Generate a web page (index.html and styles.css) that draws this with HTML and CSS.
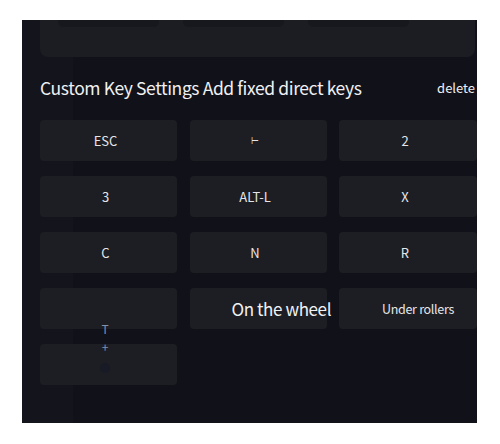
FILE: index.html
```html
<!DOCTYPE html>
<html>
<head>
<meta charset="utf-8">
<link rel="stylesheet" href="styles.css">
</head>
<body>
<div class="panel">
  <div class="top-card">
    <div class="tab"></div>
    <div class="tab"></div>
    <div class="tab"></div>
  </div>
  <div class="header">
    <div class="title">Custom Key Settings Add fixed direct keys</div>
    <div class="delete">delete</div>
  </div>
  <div class="grid">
    <div class="key">ESC</div>
    <div class="key sym">⊢</div>
    <div class="key">2</div>
    <div class="key">3</div>
    <div class="key">ALT-L</div>
    <div class="key">X</div>
    <div class="key">C</div>
    <div class="key">N</div>
    <div class="key">R</div>
    <div class="key"></div>
    <div class="key big">On the wheel</div>
    <div class="key under">Under rollers</div>
    <div class="key"></div>
    <div class="drag">
      <span class="t">T</span>
      <span class="plus">+</span>
      <span class="dot"></span>
    </div>
  </div>
</div>
</body>
</html>
```
FILE: styles.css
```css
html, body {
  margin: 0;
  padding: 0;
  background: #ffffff;
}
body {
  font-family: "Noto Sans CJK SC", "Noto Sans", sans-serif;
}
.panel {
  margin: 20px 0 0 22px;
  width: 455px;
  height: 403px;
  background: linear-gradient(to right, #14151c 0, #14151c 51px, #111219 51px, #111219 100%);
  overflow: hidden;
  padding-left: 18px;
  box-sizing: border-box;
}
.top-card {
  width: 435px;
  height: 37px;
  background: #1c1d22;
  border-radius: 0 0 8px 8px;
  display: flex;
  gap: 24px;
  padding-left: 18px;
  box-sizing: border-box;
}
.tab {
  width: 101px;
  height: 7px;
  background: #17181d;
  border-radius: 0 0 5px 5px;
}
.header {
  display: flex;
  justify-content: space-between;
  align-items: center;
  height: 24px;
  margin-top: 18px;
  padding-right: 2px;
  color: #f0f0f2;
}
.title {
  font-size: 17.5px;
  letter-spacing: -0.4px;
}
.delete {
  font-size: 13px;
  padding-top: 1px;
}
.grid {
  position: relative;
  margin-top: 21px;
  display: grid;
  grid-template-columns: 137px 137px 138px;
  grid-auto-rows: 41px;
  column-gap: 12.5px;
  row-gap: 15px;
}
.key {
  background: #1d1e23;
  border-radius: 4px;
  display: flex;
  align-items: center;
  justify-content: center;
  padding-right: 6px;
  color: #e6e6e9;
  font-size: 13px;
}
.key.big {
  font-size: 17px;
  letter-spacing: -0.4px;
  color: #f2f2f4;
  justify-content: flex-start;
  padding: 0 0 0 42px;
  white-space: nowrap;
}
.key.under {
  font-size: 12.5px;
  letter-spacing: -0.3px;
  justify-content: flex-start;
  padding: 0 0 0 43px;
  white-space: nowrap;
}
.key.sym {
  font-size: 9px;
}
.drag {
  position: absolute;
  left: 59px;
  top: 202px;
  width: 12px;
  display: flex;
  flex-direction: column;
  align-items: center;
  color: #8290ab;
  font-size: 12px;
  line-height: 14px;
}
.drag .plus {
  margin-top: 4px;
  font-size: 12px;
}
.drag .dot {
  margin-top: 9px;
  width: 10px;
  height: 10px;
  border-radius: 50%;
  background: #181b26;
}
```
